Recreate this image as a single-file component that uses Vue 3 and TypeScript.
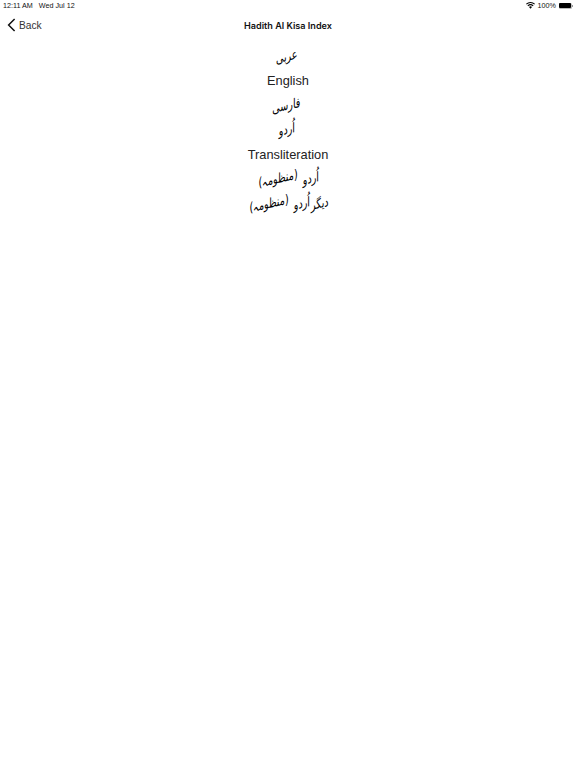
<script setup lang="ts">
interface Item { label: string; arabic: boolean }
const items: Item[] = [
  { label: 'عربى', arabic: true },
  { label: 'English', arabic: false },
  { label: 'فارسی', arabic: true },
  { label: 'اُردو', arabic: true },
  { label: 'Transliteration', arabic: false },
  { label: 'اُردو (منظومہ)', arabic: true },
  { label: 'دیگر اُردو (منظومہ)', arabic: true },
]
function words(item: Item): string[] {
  return item.arabic ? item.label.split(' ') : [item.label]
}
</script>

<template>
  <div class="page">
    <header class="status">
      <div class="status-left"><span>12:11 AM</span><span>Wed Jul 12</span></div>
      <div class="status-right">
        <svg class="wifi" width="9" height="7" viewBox="0 0 18 14">
          <path d="M9 13.5 6 10.2a4.3 4.3 0 0 1 6 0Z" fill="#000" />
          <path d="M4.4 8.5a6.6 6.6 0 0 1 9.2 0l1.5-1.7a8.9 8.9 0 0 0-12.2 0Z" fill="#000" />
          <path d="M1.4 5.2a10.9 10.9 0 0 1 15.2 0L18 3.6a13.2 13.2 0 0 0-18 0Z" fill="#000" />
        </svg>
        <span>100%</span>
        <span class="battery"><span class="battery-fill"></span></span>
        <span class="battery-tip"></span>
      </div>
    </header>
    <nav class="nav">
      <div class="back">
        <svg width="9" height="14" viewBox="0 0 9 14" fill="none">
          <path d="M7.6 1 1.6 7l6 6" stroke="#111" stroke-width="1.5" />
        </svg>
        <span>Back</span>
      </div>
      <h1 class="title">Hadith Al Kisa Index</h1>
    </nav>
    <ul class="list">
      <li v-for="item in items" :key="item.label" class="row" :class="{ arabic: item.arabic }" :dir="item.arabic ? 'rtl' : 'ltr'">
        <span v-for="w in words(item)" :key="w" class="word">{{ w }}</span>
      </li>
    </ul>
  </div>
</template>

<style scoped>
.page {
  width: 576px;
  height: 768px;
  background: #fff;
  color: #000;
  font-family: "Liberation Sans", Arial, sans-serif;
  overflow: hidden;
}
.status {
  display: flex;
  justify-content: space-between;
  align-items: center;
  height: 11px;
  padding: 0 3px 0 3px;
  font-size: 7.2px;
  color: #111;
}
.status-left {
  display: flex;
  gap: 6px;
}
.status-right {
  display: flex;
  align-items: center;
  gap: 2.5px;
}
.battery {
  display: block;
  width: 13px;
  height: 6px;
  padding: 0.5px;
  border-radius: 1.5px;
  background: #bbb;
  box-sizing: border-box;
}
.battery-fill {
  display: block;
  height: 100%;
  border-radius: 1px;
  background: #000;
}
.battery-tip {
  display: block;
  width: 1px;
  height: 2px;
  margin-left: -2px;
  background: #999;
}
.nav {
  position: relative;
  display: flex;
  justify-content: center;
  align-items: center;
  height: 28px;
}
.back {
  position: absolute;
  left: 7px;
  top: 0;
  height: 100%;
  display: flex;
  align-items: center;
  gap: 3px;
  font-size: 10.2px;
  color: #333;
}
.title {
  margin: 0;
  font-family: Inter, "Liberation Sans", sans-serif;
  font-size: 9.1px;
  font-weight: 600;
  color: #111;
}
.list {
  list-style: none;
  margin: 0;
  padding: 5.5px 0 0;
  display: flex;
  flex-direction: column;
  align-items: center;
}
.row {
  height: 24.5px;
  line-height: 24.5px;
  font-size: 12.8px;
  color: #222;
  text-align: center;
}
.row.arabic {
  display: flex;
  gap: 2px;
  font-family: "DejaVu Sans", sans-serif;
  font-size: 13.5px;
  color: #000;
}
.row.arabic .word {
  display: block;
  transform: translate(-1.5px, -1px) scaleX(0.71) skewY(-9deg);
  margin: 0 -4px;
}
</style>
